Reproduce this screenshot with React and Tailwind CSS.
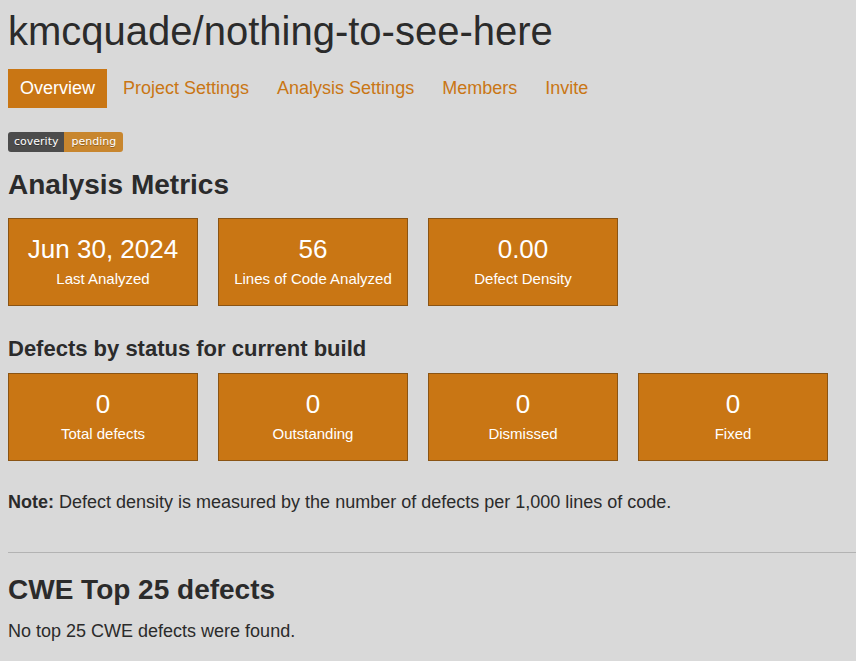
import React from "react";

const metrics = [
  { value: "Jun 30, 2024", label: "Last Analyzed" },
  { value: "56", label: "Lines of Code Analyzed" },
  { value: "0.00", label: "Defect Density" },
];

const defects = [
  { value: "0", label: "Total defects" },
  { value: "0", label: "Outstanding" },
  { value: "0", label: "Dismissed" },
  { value: "0", label: "Fixed" },
];

const tabs = ["Project Settings", "Analysis Settings", "Members", "Invite"];

function StatCard({ value, label }) {
  return (
    <div className="w-[190px] h-[88px] bg-[#c97614] border border-[#8a5414] text-white text-center pt-[15px]">
      <div className="text-[26px] leading-[30px]">{value}</div>
      <div className="text-[15px] leading-[18px] mt-[6px]">{label}</div>
    </div>
  );
}

export default function App() {
  return (
    <div className="min-h-[661px] bg-[#d9d9d9] text-[#2b2b2b] font-['Liberation_Sans',Arial,sans-serif] pl-2 overflow-hidden">
      <h1 className="pt-[7px] text-[40px] leading-[48px] whitespace-nowrap">
        kmcquade/nothing-to-see-here
      </h1>

      {/* tabs */}
      <div className="mt-[14px] flex gap-[4px] h-[39px] text-[18px] leading-[39px]">
        <span className="bg-[#c97614] text-white px-3">Overview</span>
        {tabs.map((t) => (
          <span key={t} className="px-3 text-[#c97614] whitespace-nowrap">
            {t}
          </span>
        ))}
      </div>

      {/* badge */}
      <div className="mt-[24px] flex w-max h-[20px] rounded-[3px] overflow-hidden text-[11px] leading-[20px] text-white font-['DejaVu_Sans',Verdana,sans-serif] [text-shadow:0_1px_0_rgba(1,1,1,0.3)]">
        <span className="bg-[#4c4c4c] px-[6px]">coverity</span>
        <span className="bg-[#c8862e] px-[7px]">pending</span>
      </div>

      <h2 className="mt-[17px] text-[28px] leading-[32px] font-bold">Analysis Metrics</h2>
      <div className="mt-[17px] flex gap-5">
        {metrics.map((m) => (
          <StatCard key={m.label} {...m} />
        ))}
      </div>

      <h3 className="mt-[30px] text-[22px] leading-[26px] font-bold">
        Defects by status for current build
      </h3>
      <div className="mt-[11px] flex gap-5">
        {defects.map((d) => (
          <StatCard key={d.label} {...d} />
        ))}
      </div>

      <p className="mt-[30px] text-[18px] leading-[22px]">
        <b>Note:</b> Defect density is measured by the number of defects per 1,000 lines of code.
      </p>

      <hr className="mt-[39px] border-0 h-px bg-[#b3b3b3]" />

      <h2 className="mt-[21px] text-[28px] leading-[32px] font-bold">CWE Top 25 defects</h2>
      <p className="mt-[14px] text-[18px] leading-[22px]">No top 25 CWE defects were found.</p>
    </div>
  );
}
